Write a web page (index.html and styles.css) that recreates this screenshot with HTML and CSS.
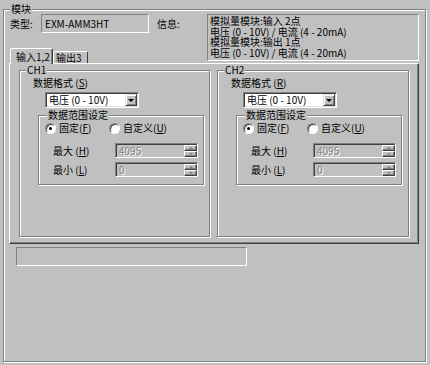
FILE: index.html
```html
<!DOCTYPE html>
<html lang="zh-CN">
<head>
    <meta charset="UTF-8">
    <title>模块</title>
    <link rel="stylesheet" href="styles.css">
</head>
<body>
    <div class="group module">
        <span class="group-title">模块</span>

        <div class="header">
            <div class="header-main">
                <div class="type-row">
                    <span class="label-type">类型:</span>
                    <div class="field">EXM-AMM3HT</div>
                    <span class="label-info">信息:</span>
                </div>
                <div class="tabs">
                    <div class="tab tab-active">输入1,2</div>
                    <div class="tab">输出3</div>
                </div>
            </div>
            <div class="info">
                模拟量模块:输入 2点<br>
                电压 (0 - 10V) / 电流 (4 - 20mA)<br>
                模拟量模块:输出 1点<br>
                电压 (0 - 10V) / 电流 (4 - 20mA)
            </div>
        </div>

        <div class="tab-pane">
            <div class="group channel">
                <span class="group-title">CH1</span>
                <div class="format-label">数据格式 (<u>S</u>)</div>
                <div class="combo">
                    <span class="combo-text">电压 (0 - 10V)</span>
                    <span class="combo-btn"></span>
                </div>
                <div class="group range">
                    <span class="group-title">数据范围设定</span>
                    <div class="radio-row">
                        <label class="option option-first"><span class="radio checked"></span><span>固定(<u>F</u>)</span></label>
                        <label class="option"><span class="radio"></span><span>自定义(<u>U</u>)</span></label>
                    </div>
                    <div class="limit-row">
                        <span class="limit-label">最大 (<u>H</u>)</span>
                        <div class="spin">
                            <span class="spin-value">4095</span>
                            <span class="spin-btns"><span class="spin-btn up"></span><span class="spin-btn down"></span></span>
                        </div>
                    </div>
                    <div class="limit-row">
                        <span class="limit-label">最小 (<u>L</u>)</span>
                        <div class="spin">
                            <span class="spin-value">0</span>
                            <span class="spin-btns"><span class="spin-btn up"></span><span class="spin-btn down"></span></span>
                        </div>
                    </div>
                </div>
            </div>

            <div class="group channel">
                <span class="group-title">CH2</span>
                <div class="format-label">数据格式 (<u>R</u>)</div>
                <div class="combo">
                    <span class="combo-text">电压 (0 - 10V)</span>
                    <span class="combo-btn"></span>
                </div>
                <div class="group range">
                    <span class="group-title">数据范围设定</span>
                    <div class="radio-row">
                        <label class="option option-first"><span class="radio checked"></span><span>固定(<u>F</u>)</span></label>
                        <label class="option"><span class="radio"></span><span>自定义(<u>U</u>)</span></label>
                    </div>
                    <div class="limit-row">
                        <span class="limit-label">最大 (<u>H</u>)</span>
                        <div class="spin">
                            <span class="spin-value">4095</span>
                            <span class="spin-btns"><span class="spin-btn up"></span><span class="spin-btn down"></span></span>
                        </div>
                    </div>
                    <div class="limit-row">
                        <span class="limit-label">最小 (<u>L</u>)</span>
                        <div class="spin">
                            <span class="spin-value">0</span>
                            <span class="spin-btns"><span class="spin-btn up"></span><span class="spin-btn down"></span></span>
                        </div>
                    </div>
                </div>
            </div>
        </div>

        <div class="status"></div>
    </div>
</body>
</html>
```

FILE: styles.css
```css
body {
    margin: 0;
    width: 430px;
    height: 365px;
    background-color: #c0c0c0;
    font-family: "Noto Sans CJK SC", sans-serif;
    font-size: 10px;
    line-height: 12px;
    color: #000;
    text-autospace: no-autospace;
}

u {
    text-underline-offset: 1px;
}

/* Etched group boxes */
.group {
    position: relative;
    box-sizing: border-box;
    border: 1px solid #808080;
    box-shadow: 1px 1px 0 #fff, inset 1px 1px 0 #fff;
}

.group-title {
    position: absolute;
    top: -7px;
    left: 6px;
    padding: 0 1px;
    background-color: #c0c0c0;
    line-height: 12px;
}

.module {
    width: 423px;
    height: 353px;
    margin: 9px 0 0 3px;
    padding-top: 4px;
}

/* Header */
.header {
    display: flex;
    align-items: flex-start;
}

.header-main {
    width: 203px;
}

.type-row {
    display: grid;
    grid-template-columns: 37px 108px auto;
    align-items: center;
    height: 19px;
}

.label-type {
    padding-left: 6px;
}

.label-info {
    padding-left: 8px;
}

.field {
    box-sizing: border-box;
    height: 19px;
    padding-left: 3px;
    border: 1px solid;
    border-color: #808080 #fff #fff #808080;
    line-height: 17px;
}

.info {
    box-sizing: border-box;
    width: 212px;
    height: 47px;
    padding: 1px 0 0 2px;
    border: 1px solid;
    border-color: #808080 #fff #fff #808080;
    line-height: 10.5px;
    white-space: nowrap;
    overflow: hidden;
}

/* Tabs */
.tabs {
    display: flex;
    align-items: flex-end;
    height: 16px;
    margin: 15px 0 -1px;
    padding-left: 6px;
}

.tab {
    box-sizing: border-box;
    width: 35px;
    height: 12px;
    margin-bottom: 1px;
    padding-left: 2px;
    border: 1px solid #fff;
    border-right-color: #404040;
    border-bottom: none;
    border-radius: 2px 2px 0 0;
    line-height: 11px;
    white-space: nowrap;
}

.tab-active {
    position: relative;
    z-index: 1;
    width: 43px;
    height: 16px;
    margin-bottom: 0;
    padding: 2px 0 0 5px;
    background-color: #c0c0c0;
    box-shadow: inset -1px 0 0 #808080;
}

.tab-pane {
    box-sizing: border-box;
    display: grid;
    grid-template-columns: 191px 192px;
    column-gap: 7px;
    align-items: start;
    width: 410px;
    height: 181px;
    margin-left: 5px;
    padding: 6px 0 0 9px;
    border: 1px solid;
    border-color: #fff #404040 #404040 #fff;
    box-shadow: inset -1px -1px 0 #808080;
}

/* Channel groups */
.channel {
    height: 167px;
}

.format-label {
    margin: 6px 0 0 13px;
}

.combo {
    box-sizing: border-box;
    display: flex;
    width: 94px;
    height: 16px;
    margin: 3px 0 0 25px;
    padding: 1px;
    border: 1px solid;
    border-color: #808080 #fff #fff #808080;
    box-shadow: inset 1px 1px 0 #404040, inset -1px -1px 0 #dfdfdf;
    background-color: #fff;
}

.combo-text {
    flex: 1;
    padding-left: 2px;
    white-space: nowrap;
}

.combo-btn {
    box-sizing: border-box;
    display: flex;
    align-items: center;
    justify-content: center;
    width: 12px;
    border: 1px solid;
    border-color: #dfdfdf #404040 #404040 #dfdfdf;
    box-shadow: inset 1px 1px 0 #fff, inset -1px -1px 0 #808080;
    background-color: #c0c0c0;
}

.combo-btn:after {
    content: "";
    border-left: 3px solid transparent;
    border-right: 3px solid transparent;
    border-top: 3px solid #000;
}

.range {
    width: 166px;
    height: 70px;
    margin: 7px 0 0 18px;
}

.range .group-title {
    left: 8px;
}

.radio-row {
    display: flex;
    align-items: center;
    height: 12px;
    margin: 6px 0 0 6px;
}

.option {
    display: flex;
    align-items: center;
    gap: 3px;
    white-space: nowrap;
}

.option-first {
    width: 64px;
}

.radio {
    position: relative;
    box-sizing: border-box;
    width: 11px;
    height: 11px;
    border: 1px solid;
    border-color: #808080 #fff #fff #808080;
    border-radius: 50%;
    box-shadow: inset 1px 1px 0 #404040;
    background-color: #fff;
}

.radio.checked:after {
    content: "";
    position: absolute;
    top: 3px;
    left: 3px;
    width: 3px;
    height: 3px;
    border-radius: 50%;
    background-color: #000;
}

.limit-row {
    display: grid;
    grid-template-columns: 76px 83px;
    align-items: center;
    margin-top: 9px;
}

.limit-row + .limit-row {
    margin-top: 4px;
}

.limit-label {
    padding-left: 14px;
}

.spin {
    box-sizing: border-box;
    display: flex;
    height: 15px;
    padding: 1px 0 0 1px;
    border: 1px solid;
    border-color: #808080 #fff #fff #808080;
    box-shadow: inset 1px 1px 0 #404040;
}

.spin-value {
    flex: 1;
    padding-left: 2px;
    color: #808080;
    text-shadow: 1px 1px 0 #fff;
}

.spin-btns {
    display: flex;
    flex-direction: column;
    width: 13px;
}

.spin-btn {
    box-sizing: border-box;
    display: flex;
    flex: 1;
    align-items: center;
    justify-content: center;
    border: 1px solid;
    border-color: #fff #404040 #404040 #fff;
    box-shadow: inset -1px -1px 0 #808080;
}

.spin-btn.up:after {
    content: "";
    border-left: 2px solid transparent;
    border-right: 2px solid transparent;
    border-bottom: 2px solid #808080;
}

.spin-btn.down:after {
    content: "";
    border-left: 2px solid transparent;
    border-right: 2px solid transparent;
    border-top: 2px solid #808080;
}

.status {
    box-sizing: border-box;
    width: 231px;
    height: 19px;
    margin: 3px 0 0 12px;
    border: 1px solid;
    border-color: #808080 #fff #fff #808080;
}
```
